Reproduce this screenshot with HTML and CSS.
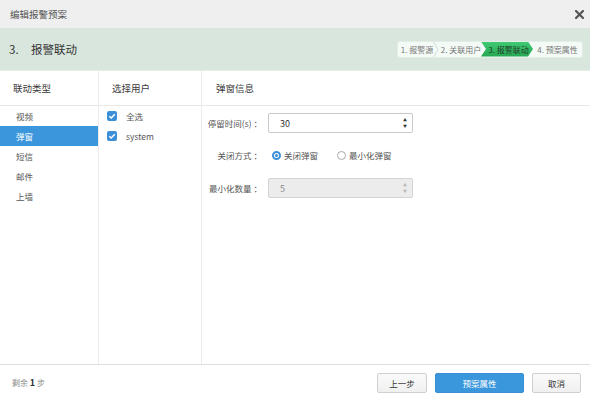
FILE: index.html
```html
<!DOCTYPE html>
<html>
<head>
<meta charset="utf-8">
<link rel="stylesheet" href="styles.css">
</head>
<body>
<div class="dialog">
  <div class="titlebar">
    <span class="title">编辑报警预案</span>
    <svg class="close" width="9" height="9" viewBox="0 0 9 9"><path d="M1 1 L8 8 M8 1 L1 8" stroke="#555" stroke-width="2.2" stroke-linecap="square"/></svg>
  </div>
  <div class="stepband">
    <div class="steptitle"><span class="num">3.</span><span>报警联动</span></div>
    <div class="steps">
      <div class="step s1">1. 报警源</div>
      <svg class="sep" width="6" height="16" viewBox="0 0 6 16"><path d="M0.5 0 L5 8 L0.5 16" fill="none" stroke="#cfdcd3" stroke-width="1"/></svg>
      <div class="step s2">2. 关联用户</div>
      <div class="step s3 active">3. 报警联动</div>
      <div class="step s4">4. 预案属性</div>
    </div>
  </div>
  <div class="main">
    <div class="col col1">
      <div class="colhead">联动类型</div>
      <ul class="typelist">
        <li>视频</li>
        <li class="sel">弹窗</li>
        <li>短信</li>
        <li>邮件</li>
        <li>上墙</li>
      </ul>
    </div>
    <div class="col col2">
      <div class="colhead">选择用户</div>
      <ul class="userlist">
        <li><span class="cb"><svg width="10" height="10" viewBox="0 0 10 10"><path d="M2.3 5.2 L4.2 7 L7.8 3.2" fill="none" stroke="#fff" stroke-width="1.5"/></svg></span>全选</li>
        <li><span class="cb"><svg width="10" height="10" viewBox="0 0 10 10"><path d="M2.3 5.2 L4.2 7 L7.8 3.2" fill="none" stroke="#fff" stroke-width="1.5"/></svg></span>system</li>
      </ul>
    </div>
    <div class="col col3">
      <div class="colhead">弹窗信息</div>
      <div class="form">
        <div class="row">
          <label class="lbl">停留时间(s) ：</label>
          <div class="input"><span>30</span><span class="spin"><i>▲</i><i>▼</i></span></div>
        </div>
        <div class="row radios">
          <label class="lbl">关闭方式 ：</label>
          <span class="radio on"></span><span class="rtext">关闭弹窗</span>
          <span class="radio"></span><span class="rtext">最小化弹窗</span>
        </div>
        <div class="row">
          <label class="lbl">最小化数量 ：</label>
          <div class="input disabled"><span>5</span><span class="spin"><i>▲</i><i>▼</i></span></div>
        </div>
      </div>
    </div>
  </div>
  <div class="footer">
    <span class="remain">剩余 <b>1</b> 步</span>
    <div class="btns">
      <button class="btn prev">上一步</button>
      <button class="btn primary">预案属性</button>
      <button class="btn cancel">取消</button>
    </div>
  </div>
</div>
</body>
</html>
```
FILE: styles.css
```css
* { box-sizing: border-box; }
html, body { margin: 0; padding: 0; background: #fff; }
body {
  width: 590px;
  height: 400px;
  overflow: hidden;
  font-family: "Noto Sans CJK SC", "Noto Sans", sans-serif;
  color: #444;
}
.dialog { width: 590px; height: 400px; display: flex; flex-direction: column; }

.titlebar {
  height: 28px;
  background: #efefef;
  display: flex;
  align-items: center;
  justify-content: space-between;
  padding: 0 6px 0 10px;
}
.title { font-size: 9.5px; color: #555; }
.close { display: block; }

.stepband {
  height: 43px;
  background: #d9e6dd;
  border-bottom: 1px solid #e6eee8;
  display: flex;
  align-items: center;
  justify-content: space-between;
  padding: 0 7px 0 9px;
}
.steptitle { font-size: 11.5px; color: #333; display: flex; }
.steptitle .num { width: 22px; }

.steps {
  display: flex;
  height: 17px;
  background: #f4faf6;
  border: 1px solid #e3eee6;
  border-radius: 3px;
  overflow: hidden;
  font-size: 8px;
  color: #777;
  align-items: stretch;
}
.step { display: flex; align-items: center; justify-content: center; white-space: nowrap; }
.s1 { width: 35px; padding-left: 3px; }
.sep { display: block; height: 15px; }
.s2 { width: 44px; }
.s3 { width: 52px; margin-left: -2px; }
.s4 { width: 49px; }
.active {
  background: linear-gradient(#3fca73, #26a752);
  color: #1f3a28;
  clip-path: polygon(0 0, calc(100% - 5px) 0, 100% 50%, calc(100% - 5px) 100%, 0 100%, 5px 50%);
  padding-left: 3px;
}

.main {
  height: 294px;
  display: flex;
  border-bottom: 1px solid #dedede;
}
.col { border-right: 1px solid #ebebeb; }
.col1 { width: 99px; }
.col2 { width: 103px; }
.col3 { flex: 1; border-right: none; }
.colhead {
  height: 35px;
  border-bottom: 1px solid #e8e8e8;
  display: flex;
  align-items: center;
  font-size: 9.5px;
  color: #3a3a3a;
}
.col1 .colhead { padding-left: 13px; }
.col2 .colhead { padding-left: 13px; }
.col3 .colhead { padding-left: 14px; }

ul { list-style: none; margin: 0; padding: 0; }
.typelist li {
  height: 20px;
  line-height: 20px;
  padding-left: 16px;
  font-size: 8.5px;
  color: #555;
}
.typelist li.sel { background: #3b96dc; color: #fff; }

.userlist li {
  height: 20px;
  display: flex;
  align-items: center;
  padding-left: 8px;
  font-size: 8.5px;
  color: #555;
}
.cb {
  width: 10px;
  height: 10px;
  background: #3a8fd8;
  border-radius: 2px;
  margin-right: 9px;
  display: block;
}
.cb svg { display: block; }

.form { padding-top: 7px; }
.row { display: flex; align-items: center; height: 20px; margin-bottom: 12px; }
.row.radios { margin-bottom: 13px; }
.lbl {
  width: 60px;
  text-align: right;
  font-size: 8.5px;
  color: #555;
  white-space: nowrap;
  margin-right: 6px;
}
.input {
  width: 145px;
  height: 20px;
  border: 1px solid #c9c9c9;
  border-radius: 2px;
  display: flex;
  align-items: center;
  justify-content: space-between;
  padding: 0 5px 0 11px;
  font-size: 9px;
  color: #333;
  background: #fff;
}
.input.disabled { background: #ececec; color: #888; border-color: #d4d4d4; }
.spin { display: flex; flex-direction: column; font-size: 4px; line-height: 6px; color: #333; }
.spin i { font-style: normal; }
.input.disabled .spin { color: #b8b8b8; }

.radio {
  width: 9px;
  height: 9px;
  border-radius: 50%;
  border: 1px solid #aaa;
  background: #fff;
  margin-left: 4px;
  margin-right: 3px;
  position: relative;
}
.radio.on { border: 2px solid #3a8fd8; }
.radio.on::after {
  content: "";
  position: absolute;
  left: 1px; top: 1px;
  width: 3px; height: 3px;
  border-radius: 50%;
  background: #3a8fd8;
}
.rtext { font-size: 8.5px; color: #555; margin-right: 15px; }

.footer {
  flex: 1;
  display: flex;
  align-items: center;
  justify-content: space-between;
  padding: 0 9px 0 12px;
}
.remain { font-size: 8px; color: #888; }
.remain b { color: #333; font-size: 9px; }
.btns { display: flex; gap: 8px; }
.btn {
  height: 20px;
  border: 1px solid #cfcfcf;
  border-radius: 2px;
  background: linear-gradient(#fafafa, #f0f0f0);
  font-family: inherit;
  font-size: 8.5px;
  color: #333;
  padding: 0;
}
.prev { width: 50px; }
.primary { width: 89px; background: #3a97dc; border-color: #3a8fd4; color: #fff; }
.cancel { width: 49px; }
```
